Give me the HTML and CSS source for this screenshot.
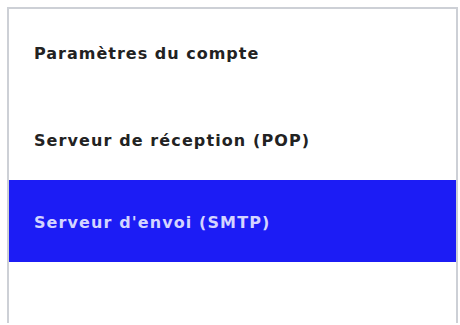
FILE: index.html
```html
<!DOCTYPE html>
<html lang="fr">
<head>
<meta charset="utf-8">
<link rel="stylesheet" href="styles.css">
</head>
<body>
<div class="panel">
  <div class="item first">Paramètres du compte</div>
  <div class="item second">Serveur de réception (POP)</div>
  <div class="item selected">Serveur d'envoi (SMTP)</div>
</div>
</body>
</html>
```

FILE: styles.css
```css
html, body {
  margin: 0;
  padding: 0;
  background: #ffffff;
}
body {
  width: 460px;
  height: 325px;
  overflow: hidden;
  font-family: "DejaVu Sans", "Noto Sans", sans-serif;
}
.panel {
  margin: 7px 0 0 7px;
  width: 447px;
  height: 314px;
  border: 2px solid #cdd0d6;
  border-bottom: none;
  background: #ffffff;
  display: flex;
  flex-direction: column;
}
.item {
  box-sizing: border-box;
  height: 85px;
  display: flex;
  align-items: center;
  padding-left: 25px;
  font-size: 16px;
  letter-spacing: 1.1px;
  font-weight: bold;
  color: #222222;
}
.item.first {
  height: 86px;
  padding-top: 2px;
  letter-spacing: 1px;
}
.item.second {
  padding-top: 5px;
}
.item.selected {
  height: 82px;
  padding-top: 2px;
  background: #1c1cf5;
  color: #d4d4ff;
}
```
